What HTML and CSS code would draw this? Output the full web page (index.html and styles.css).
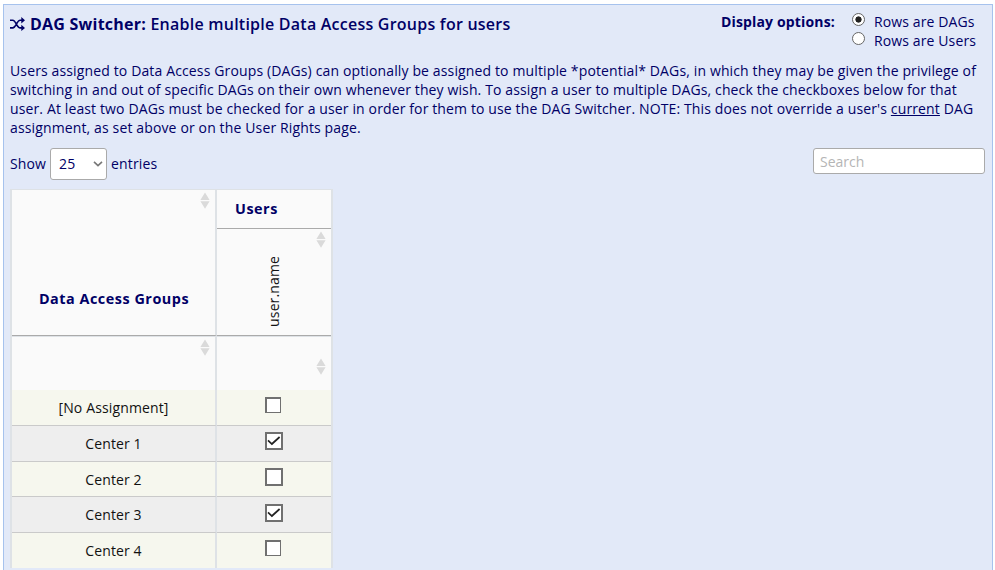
FILE: index.html
```html
<!DOCTYPE html>
<html lang="en">
<head>
<meta charset="utf-8">
<title>DAG Switcher</title>
<link rel="stylesheet" href="styles.css">
</head>
<body>
<svg class="defs" width="0" height="0" aria-hidden="true">
  <symbol id="sort" viewBox="0 0 10 18"><path d="M5 0.5 9.6 8H.4zM.4 9.2h9.2L5 16.7z" fill="#dadada"/></symbol>
  <symbol id="check" viewBox="0 0 14 14"><path d="M1 6.3 4.9 10 12.6 3" fill="none" stroke="#222" stroke-width="1.7"/></symbol>
</svg>
<main class="panel">
  <header class="top">
    <h1 class="title">
      <svg class="shuffle" viewBox="0 0 15 14"><path d="M0 3.2H2.7C6 3.2 6.8 10.9 10.2 10.9H12M0 10.9H2.7C6 10.9 6.8 3.2 10.2 3.2H12" fill="none" stroke="#000066" stroke-width="1.6"/><path d="M11.3 0 15 3.2 11.3 6.4zM11.3 7.7 15 10.9 11.3 14z" fill="#000066"/></svg>
      <span><b>DAG Switcher:</b> Enable multiple Data Access Groups for users</span>
    </h1>
    <div class="options">
      <b class="options-label">Display options:</b>
      <div class="choices">
        <label class="choice"><span class="radio on"></span><span>Rows are DAGs</span></label>
        <label class="choice"><span class="radio"></span><span>Rows are Users</span></label>
      </div>
    </div>
  </header>
  <p class="intro">Users assigned to Data Access Groups (DAGs) can optionally be assigned to multiple *potential* DAGs, in which they may be given the privilege of<br><span class="tight">switching in and out of specific DAGs on their own whenever they wish. To assign a user to multiple DAGs, check the checkboxes below for that<br>user. At least two DAGs must be checked for a user in order for them to use the DAG Switcher. NOTE: This does not override a user's <u>current</u> DAG</span><br>assignment, as set above or on the User Rights page.</p>
  <div class="controls">
    <div class="length"><span>Show</span><span class="select"><span>25</span><svg width="10" height="6" viewBox="0 0 10 6"><path d="M1 .8 5 4.6 9 .8" fill="none" stroke="#777" stroke-width="1.6"/></svg></span><span>entries</span></div>
    <input class="search" type="text" placeholder="Search">
  </div>
  <section class="grid">
    <div class="cell head groups"><b>Data Access Groups</b><svg class="sort"><use href="#sort"/></svg></div>
    <div class="cell head users"><b>Users</b></div>
    <div class="cell head user"><span class="vertical">user.name</span><svg class="sort"><use href="#sort"/></svg></div>
    <div class="cell head spacer"><svg class="sort"><use href="#sort"/></svg></div>
    <div class="cell head spacer"><svg class="sort low"><use href="#sort"/></svg></div>
    <div class="cell">[No Assignment]</div><div class="cell mark"><span class="box small"></span></div>
    <div class="cell alt">Center 1</div><div class="cell alt mark"><span class="box"><svg><use href="#check"/></svg></span></div>
    <div class="cell">Center 2</div><div class="cell mark"><span class="box"></span></div>
    <div class="cell alt">Center 3</div><div class="cell alt mark lower"><span class="box"><svg><use href="#check"/></svg></span></div>
    <div class="cell last">Center 4</div><div class="cell last mark"><span class="box small"></span></div>
  </section>
</main>
</body>
</html>
```
FILE: styles.css
```css
* { box-sizing: border-box; }
html { overflow: hidden; }
body { margin: 0; background: #fff; font: 14px/19px "Open Sans", sans-serif; letter-spacing: .13px; color: #000066; overflow: hidden; }
.defs { position: absolute; }
.panel { width: 990px; height: 580px; margin: 4px 0 0 3px; padding: 0 7px 0 6px; border: 1px solid #a6c2ed; background: #e2e9f8; }
.top { display: flex; justify-content: space-between; height: 56px; }
.title { display: flex; align-items: center; gap: 5px; height: 22px; margin: 8px 0 0; font-size: 16px; line-height: 22px; font-weight: 600; letter-spacing: .235px; white-space: nowrap; }
.title b { font-weight: 700; }
.shuffle { width: 15px; height: 14px; }
.options { display: flex; gap: 17px; width: 264px; padding-top: 7px; white-space: nowrap; }
.options-label { letter-spacing: .15px; }
.choice { display: flex; gap: 9px; height: 19px; }
.radio { width: 13px; height: 13px; margin-top: 1px; border: 1px solid #666; border-radius: 50%; background: #fff; }
.radio.on { background: radial-gradient(circle, #222 0 2.8px, #fff 3.4px); }
.intro { margin: 0; height: 76px; letter-spacing: .135px; white-space: nowrap; }
.tight { letter-spacing: .125px; }
.controls { display: flex; justify-content: space-between; margin-top: 11px; height: 32px; }
.length { display: flex; align-items: center; gap: 4px; height: 31px; }
.select { display: flex; flex-shrink: 0; align-items: center; justify-content: space-between; width: 57px; height: 32px; margin-bottom: -1px; padding: 0 3px 1px 8px; border: 1px solid #aaa; border-radius: 3px; background: #fff; }
.search { width: 172px; height: 26px; padding: 0 6px; border: 1px solid #aaa; border-radius: 3px; background: #fff; font: inherit; }
.search::placeholder { color: #b5b5b5; opacity: 1; }
.grid { display: grid; grid-template-columns: 205px 114px; grid-template-rows: 39px 107px 54px 36px 36px 35px 36px 35px; width: 323px; margin-top: 9px; border: solid #dee2e6; border-width: 1px 2px 0; }
.cell { display: flex; align-items: center; justify-content: center; position: relative; border-bottom: 1px solid #cacaca; background: #f6f7ee; color: #111; }
.cell.alt { background: #eee; }
.cell.last { border-bottom: 0; }
.head { background: #fafafa; border-bottom: 1px solid #aaa; color: #000066; }
.cell:not(.mark) { border-right: 2px solid #dee2e6; }
.cell.users, .cell.user, .cell.spacer + .spacer { border-right: 0; }
.groups { grid-row: span 2; align-items: flex-end; padding-bottom: 27px; font-size: 14.4px; letter-spacing: .52px; }
.groups b { margin-left: 1px; }
.users { justify-content: flex-start; padding: 0 0 2px 18px; font-size: 14.4px; letter-spacing: .52px; }
.user { color: #111; }
.vertical { writing-mode: vertical-rl; transform: rotate(180deg); margin: 18px 2px 0 0; }
.head.spacer { border-top: 1px solid #dee2e6; border-bottom: 0; }
.sort { position: absolute; top: 2px; right: 5.5px; width: 10px; height: 18px; }
.sort.low { top: 21px; }
.mark { align-items: flex-start; justify-content: flex-start; padding: 6px 0 0 48px; }
.mark.lower { padding-top: 7px; }
.box { width: 18px; height: 18px; border: 2px solid #707070; background: #fff; }
.box.small { width: 16px; height: 16px; margin-top: 1px; border-width: 2px 1px 1px 2px; }
.box svg { display: block; width: 14px; height: 14px; }
```
